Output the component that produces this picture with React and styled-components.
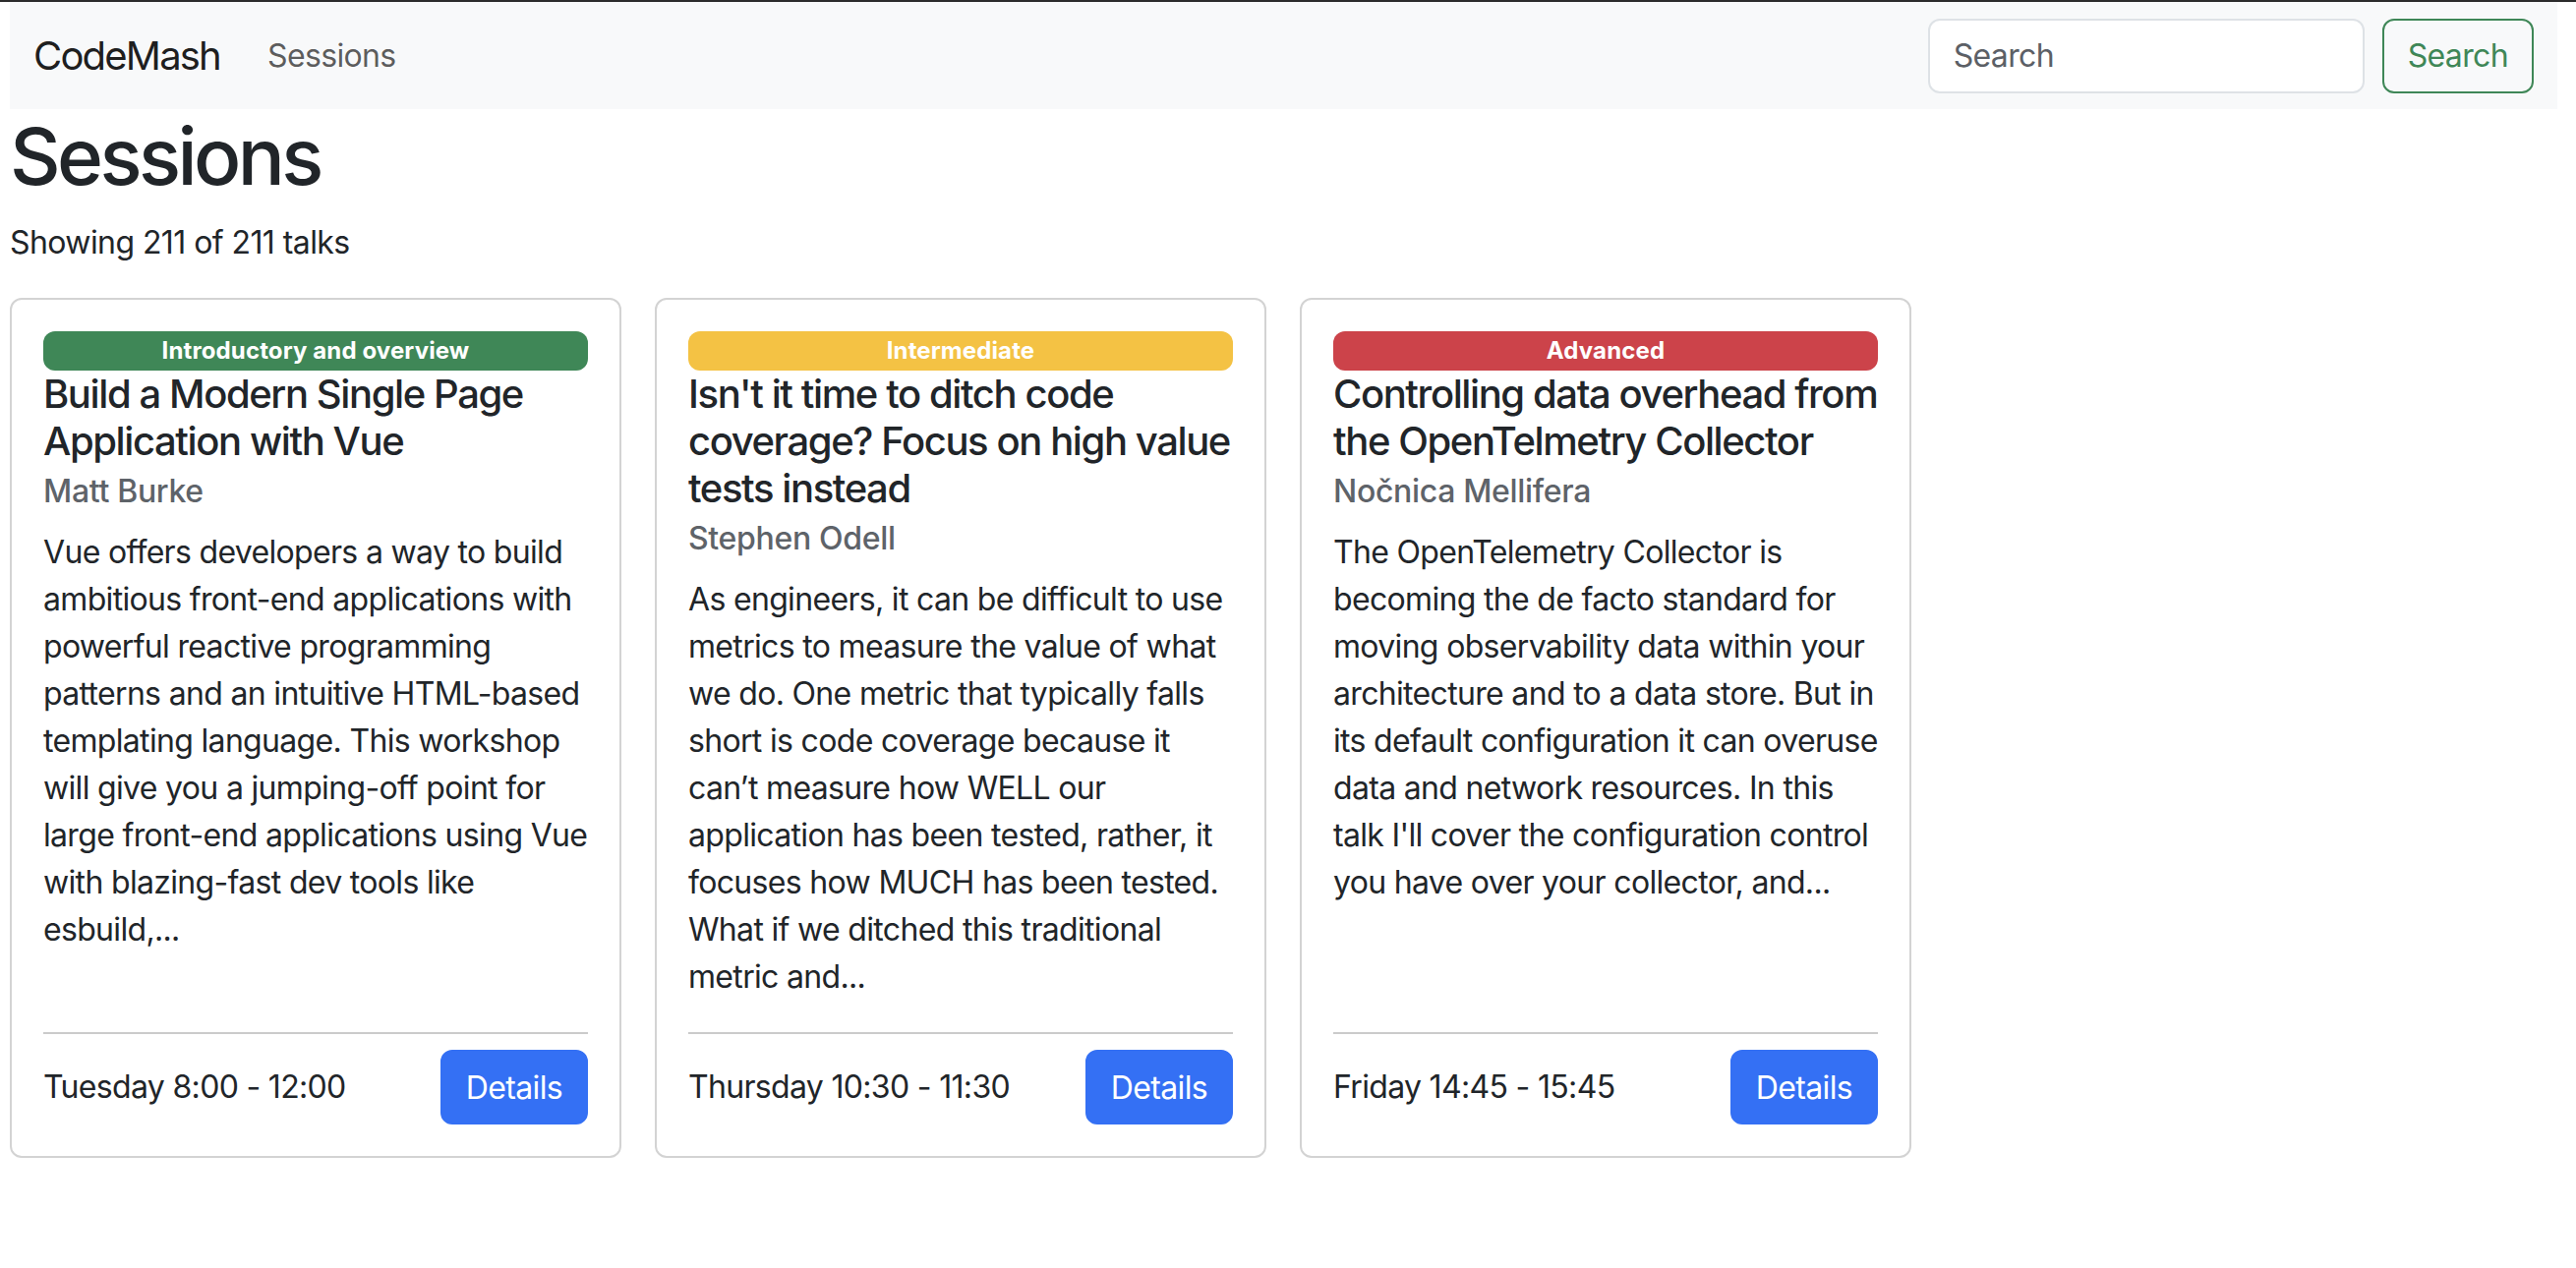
import styled, { createGlobalStyle } from 'styled-components';

const GlobalStyle = createGlobalStyle`
  body {
    margin: 0;
    background: #fff;
    color: #212529;
    font-family: Inter, "Noto Sans", "Liberation Sans", sans-serif;
  }
`;

const Page = styled.div`
  border-top: 2px solid #2c2c2c;
  padding: 0 19px 0 10px;
`;

const Navbar = styled.nav`
  display: flex;
  align-items: center;
  min-height: 109px;
  padding: 0 24px;
  background: #f8f9fa;
`;

const Brand = styled.a`
  font-size: 40px;
  letter-spacing: -0.045em;
  color: rgba(0, 0, 0, 0.9);
  margin-right: 32px;
  text-decoration: none;
`;

const NavLink = styled.a`
  font-size: 32px;
  letter-spacing: -0.02em;
  color: rgba(0, 0, 0, 0.65);
  padding: 16px;
  text-decoration: none;
`;

const SearchForm = styled.form`
  margin-left: auto;
  display: flex;
  gap: 18px;
`;

const SearchInput = styled.input`
  box-sizing: border-box;
  width: 444px;
  height: 76px;
  padding: 12px 24px;
  border: 2px solid #dee2e6;
  border-radius: 12px;
  font: inherit;
  font-size: 32px;
  letter-spacing: -0.02em;
  color: #212529;
  background: #fff;
  &::placeholder {
    color: #5c6066;
  }
`;

const OutlineButton = styled.button`
  box-sizing: border-box;
  height: 76px;
  padding: 12px 24px;
  border: 2px solid #3f8757;
  border-radius: 12px;
  background: transparent;
  color: #3f8757;
  font: inherit;
  font-size: 32px;
  letter-spacing: -0.02em;
`;

const Heading = styled.h1`
  margin: 0 0 16px;
  font-size: 80px;
  font-weight: 500;
  letter-spacing: -0.045em;
  line-height: 1.2;
`;

const Count = styled.p`
  margin: 0 0 32px;
  font-size: 32px;
  letter-spacing: -0.018em;
  line-height: 48px;
`;

const CardRow = styled.div`
  display: flex;
  gap: 34px;
  align-items: stretch;
`;

const Card = styled.article`
  box-sizing: border-box;
  width: 622px;
  display: flex;
  flex-direction: column;
  padding: 32px 32px 32px;
  border: 2px solid #d3d3d3;
  border-radius: 12px;
`;

const Badge = styled.span`
  display: block;
  padding: 8px 16px;
  border-radius: 12px;
  background: ${(p) => p.$bg};
  color: #fff;
  font-size: 24px;
  font-weight: 700;
  letter-spacing: 0.005em;
  line-height: 24px;
  text-align: center;
`;

const Title = styled.h5`
  margin: 0 0 16px;
  font-size: 40px;
  font-weight: 500;
  letter-spacing: -0.035em;
  line-height: 48px;
  white-space: nowrap;
`;

const Speaker = styled.h6`
  margin: -8px 0 0;
  font-size: 32px;
  font-weight: 500;
  letter-spacing: -0.01em;
  line-height: 38px;
  color: #5e6369;
`;

const Abstract = styled.p`
  flex: 1;
  margin: 19px 0 0;
  font-size: 32px;
  letter-spacing: -0.021em;
  line-height: 48px;
  white-space: nowrap;
`;

const Divider = styled.hr`
  width: 100%;
  margin: 32px 0 16px;
  border: 0;
  border-top: 2px solid #cbcbcb;
`;

const Footer = styled.div`
  display: flex;
  align-items: center;
  justify-content: space-between;
`;

const When = styled.span`
  font-size: 32px;
  letter-spacing: -0.021em;
  line-height: 48px;
`;

const DetailsButton = styled.button`
  box-sizing: border-box;
  height: 76px;
  padding: 12px 24px;
  border: 2px solid #3470f4;
  border-radius: 12px;
  background: #3470f4;
  color: #fff;
  font: inherit;
  font-size: 32px;
  letter-spacing: -0.02em;
`;

const levels = {
  intro: { label: 'Introductory and overview', color: '#3f8757' },
  mid: { label: 'Intermediate', color: '#f4c244' },
  adv: { label: 'Advanced', color: '#cc434a' }
};

// lines kept as they wrap in the card
const talks = [
  {
    level: 'intro',
    title: ['Build a Modern Single Page', 'Application with Vue'],
    speaker: 'Matt Burke',
    abstract: [
      'Vue offers developers a way to build',
      'ambitious front-end applications with',
      'powerful reactive programming',
      'patterns and an intuitive HTML-based',
      'templating language. This workshop',
      'will give you a jumping-off point for',
      'large front-end applications using Vue',
      'with blazing-fast dev tools like',
      'esbuild,...'
    ],
    when: 'Tuesday 8:00 - 12:00'
  },
  {
    level: 'mid',
    title: ["Isn't it time to ditch code", 'coverage? Focus on high value', 'tests instead'],
    speaker: 'Stephen Odell',
    abstract: [
      'As engineers, it can be difficult to use',
      'metrics to measure the value of what',
      'we do. One metric that typically falls',
      'short is code coverage because it',
      'can\u2019t measure how WELL our',
      'application has been tested, rather, it',
      'focuses how MUCH has been tested.',
      'What if we ditched this traditional',
      'metric and...'
    ],
    when: 'Thursday 10:30 - 11:30'
  },
  {
    level: 'adv',
    title: ['Controlling data overhead from', 'the OpenTelmetry Collector'],
    speaker: 'Nočnica Mellifera',
    abstract: [
      'The OpenTelemetry Collector is',
      'becoming the de facto standard for',
      'moving observability data within your',
      'architecture and to a data store. But in',
      'its default configuration it can overuse',
      'data and network resources. In this',
      "talk I'll cover the configuration control",
      'you have over your collector, and...'
    ],
    when: 'Friday 14:45 - 15:45'
  }
];

const Lines = ({ lines }) =>
  lines.map((line, i) => (
    <span key={i}>
      {i > 0 && <br />}
      {line}
    </span>
  ));

const TalkCard = ({ talk }) => {
  const level = levels[talk.level];
  return (
    <Card>
      <Badge $bg={level.color}>{level.label}</Badge>
      <Title>
        <Lines lines={talk.title} />
      </Title>
      <Speaker>{talk.speaker}</Speaker>
      <Abstract>
        <Lines lines={talk.abstract} />
      </Abstract>
      <Divider />
      <Footer>
        <When>{talk.when}</When>
        <DetailsButton>Details</DetailsButton>
      </Footer>
    </Card>
  );
};

export default function App() {
  return (
    <>
      <GlobalStyle />
      <Page>
        <Navbar>
          <Brand href="#">CodeMash</Brand>
          <NavLink href="#">Sessions</NavLink>
          <SearchForm onSubmit={(e) => e.preventDefault()}>
            <SearchInput type="search" placeholder="Search" />
            <OutlineButton type="submit">Search</OutlineButton>
          </SearchForm>
        </Navbar>
        <Heading>Sessions</Heading>
        <Count>Showing 211 of 211 talks</Count>
        <CardRow>
          {talks.map((t) => (
            <TalkCard key={t.speaker} talk={t} />
          ))}
        </CardRow>
      </Page>
    </>
  );
}
